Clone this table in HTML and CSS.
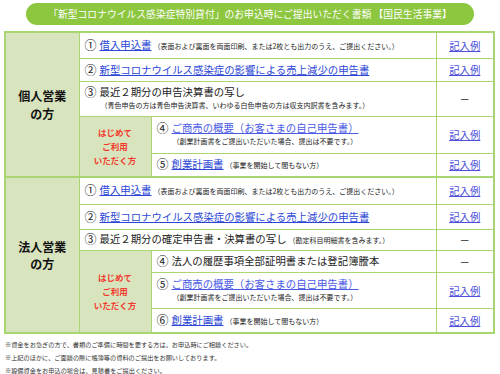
FILE: index.html
```html
<!DOCTYPE html>
<html lang="ja">
<head>
<meta charset="utf-8">
<link rel="stylesheet" href="styles.css">
</head>
<body>
<div class="page">
  <div class="title">「新型コロナウイルス感染症特別貸付」のお申込時にご提出いただく書類 【国民生活事業】</div>
  <table class="docs">
    <colgroup><col class="c-label"><col class="c-sub"><col class="c-main"><col class="c-ex"></colgroup>
    <tr class="r26">
      <th rowspan="5" class="label">個人営業<br>の方</th>
      <td colspan="2" class="item"><span class="num">①</span><a class="lnk">借入申込書</a><span class="note">（表面および裏面を両面印刷、または2枚とも出力のうえ、ご提出ください。）</span></td>
      <td class="ex"><a class="exl">記入例</a></td>
    </tr>
    <tr class="r23">
      <td colspan="2" class="item"><span class="num">②</span><a class="lnk">新型コロナウイルス感染症の影響による売上減少の申告書</a></td>
      <td class="ex"><a class="exl">記入例</a></td>
    </tr>
    <tr class="r35">
      <td colspan="2" class="item"><div class="main"><span class="num">③</span>最近２期分の申告決算書の写し</div><div class="sub">（青色申告の方は青色申告決算書、いわゆる白色申告の方は収支内訳書を含みます。）</div></td>
      <td class="ex">－</td>
    </tr>
    <tr class="r37">
      <th rowspan="2" class="first">はじめて<br>ご利用<br>いただく方</th>
      <td class="item"><div class="main"><span class="num">④</span><a class="lnk lnk2">ご商売の概要（お客さまの自己申告書）</a></div><div class="sub">（創業計画書をご提出いただいた場合、提出は不要です。）</div></td>
      <td class="ex"><a class="exl">記入例</a></td>
    </tr>
    <tr class="r24">
      <td class="item"><span class="num">⑤</span><a class="lnk">創業計画書</a><span class="note">（事業を開始して間もない方）</span></td>
      <td class="ex"><a class="exl">記入例</a></td>
    </tr>

    <tr class="r27 sect">
      <th rowspan="6" class="label">法人営業<br>の方</th>
      <td colspan="2" class="item"><span class="num">①</span><a class="lnk">借入申込書</a><span class="note">（表面および裏面を両面印刷、または2枚とも出力のうえ、ご提出ください。）</span></td>
      <td class="ex"><a class="exl">記入例</a></td>
    </tr>
    <tr class="r25">
      <td colspan="2" class="item"><span class="num">②</span><a class="lnk">新型コロナウイルス感染症の影響による売上減少の申告書</a></td>
      <td class="ex"><a class="exl">記入例</a></td>
    </tr>
    <tr class="r21">
      <td colspan="2" class="item"><span class="num">③</span>最近２期分の確定申告書・決算書の写し<span class="note">（勘定科目明細書を含みます。）</span></td>
      <td class="ex">－</td>
    </tr>
    <tr class="r22">
      <th rowspan="3" class="first">はじめて<br>ご利用<br>いただく方</th>
      <td class="item"><span class="num">④</span>法人の履歴事項全部証明書または登記簿謄本</td>
      <td class="ex">－</td>
    </tr>
    <tr class="r36">
      <td class="item"><div class="main"><span class="num">⑤</span><a class="lnk lnk2">ご商売の概要（お客さまの自己申告書）</a></div><div class="sub">（創業計画書をご提出いただいた場合、提出は不要です。）</div></td>
      <td class="ex"><a class="exl">記入例</a></td>
    </tr>
    <tr class="r25">
      <td class="item"><span class="num">⑥</span><a class="lnk">創業計画書</a><span class="note">（事業を開始して間もない方）</span></td>
      <td class="ex"><a class="exl">記入例</a></td>
    </tr>
  </table>
  <ul class="notes">
    <li>※資金をお急ぎの方で、書類のご準備に時間を要する方は、お申込時にご相談ください。</li>
    <li>※上記のほかに、ご面談の際に帳簿等の資料のご提出をお願いしております。</li>
    <li>※設備資金をお申込の場合は、見積書をご提出ください。</li>
  </ul>
</div>
</body>
</html>
```

FILE: styles.css
```css
* { box-sizing: border-box; }
html, body { margin: 0; padding: 0; background: #fff; }
body {
  font-family: "Noto Sans CJK JP", "Noto Sans", sans-serif;
  color: #222;
  width: 500px;
  height: 374px;
  overflow: hidden;
}
.page { padding-top: 3px; }
.title {
  width: 448px;
  height: 22px;
  margin: 0 auto;
  background: #8dc63f;
  border-radius: 11px;
  color: #fff;
  font-size: 9.8px;
  line-height: 22px;
  text-align: center;
  white-space: nowrap;
}
.docs {
  margin: 6px 0 0 4px;
  width: 491px;
  table-layout: fixed;
  border-collapse: collapse;
  border: 2px solid #a9d672;
}
.c-label { width: 74px; }
.c-sub { width: 72px; }
.c-ex { width: 58px; }
.docs td, .docs th {
  border: 1px solid #a9d672;
  padding: 0;
}
.docs tr.sect > * { border-top: 2px solid #a9d672; }
.label {
  background: #d8e4bd;
  font-size: 12px;
  font-weight: bold;
  line-height: 17.5px;
  color: #111;
  text-align: center;
  border-right: 1px solid #a9d672;
}
.first {
  background: #d8e4bd;
  color: #f23a2e;
  font-size: 8.5px;
  font-weight: bold;
  line-height: 14px;
  text-align: center;
}
.item {
  font-size: 10.4px;
  line-height: 14px;
  padding-left: 5px !important;
  white-space: nowrap;
  overflow: hidden;
}
.num {
  display: inline-block;
  width: 15px;
  font-size: 12px;
  line-height: 14px;
  vertical-align: top;
}
.lnk { color: #2c47d6; text-decoration: underline; }
.lnk2 { color: #4a5ae6; }
.note { font-size: 7px; margin-left: 2px; }
.sub { font-size: 7px; line-height: 13px; padding-left: 16px; }
.ex { text-align: center; font-size: 10.4px; }
.exl { color: #4d4fdc; text-decoration: underline; }
.r21 { height: 21px; }
.r22 { height: 22px; }
.r23 { height: 23px; }
.r24 { height: 24px; }
.r25 { height: 25px; }
.r26 { height: 26px; }
.r27 { height: 27px; }
.r35 { height: 35px; }
.r36 { height: 36px; }
.r37 { height: 37px; }
.notes {
  list-style: none;
  margin: 4px 0 0 5px;
  padding: 0;
  font-size: 6.2px;
  line-height: 13px;
  color: #333;
}
.notes li { white-space: nowrap; }
```
